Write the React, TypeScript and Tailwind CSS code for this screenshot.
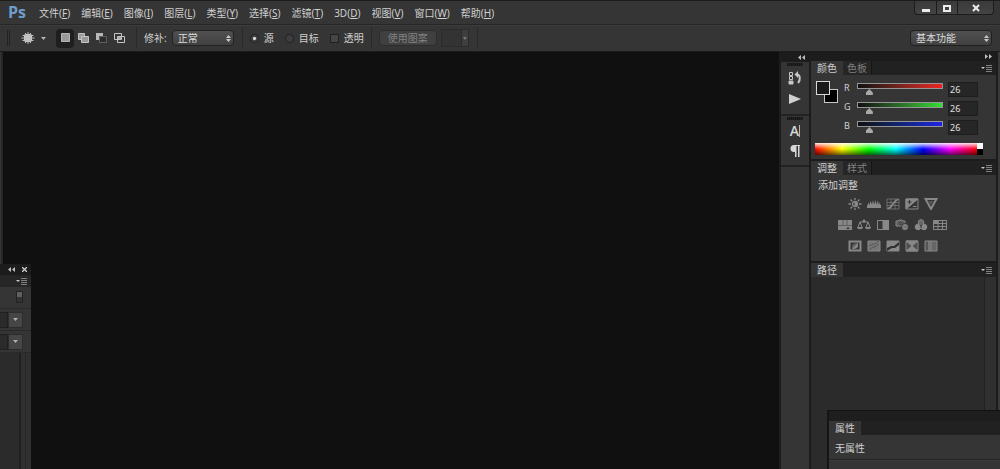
import React, { useState } from "react";

const menus = [
  { name: "文件", shortcut: "F" },
  { name: "编辑", shortcut: "E" },
  { name: "图像", shortcut: "I" },
  { name: "图层", shortcut: "L" },
  { name: "类型", shortcut: "Y" },
  { name: "选择", shortcut: "S" },
  { name: "滤镜", shortcut: "T" },
  { name: "3D", shortcut: "D" },
  { name: "视图", shortcut: "V" },
  { name: "窗口", shortcut: "W" },
  { name: "帮助", shortcut: "H" },
];

const channels = [
  {
    name: "R",
    track: "[&::-webkit-slider-runnable-track]:to-[#f02020]",
  },
  {
    name: "G",
    track: "[&::-webkit-slider-runnable-track]:to-[#30e030]",
  },
  {
    name: "B",
    track: "[&::-webkit-slider-runnable-track]:to-[#2020e8]",
  },
];

// Adjustment icons, one array per row, drawn on a 14x12 grid
const adjustments = [
  [
    {
      name: "亮度/对比度",
      art: (
        <>
          <circle cx="7" cy="6" r="2.5" strokeWidth="1.3" />
          <path d="M7 3.5a2.5 2.5 0 0 1 0 5z" fill="currentColor" />
          <path
            d="M7 0v2M7 10v2M0.500 6h2.500M11 6h2.500M2.500 1.500l1.700 1.700M9.800 8.800l1.700 1.700M2.500 10.500l1.700-1.700M9.800 3.200l1.700-1.700"
            strokeWidth="1.300"
          />
        </>
      ),
    },
    {
      name: "色阶",
      art: (
        <path
          d="M0 10V6l1 2V4l1.500 3 1-4 1.500 3.500L6 2l1.200 4.500L8.500 2l1 4.500 1.500-4 .8 4.500L13 4v3.500l1-1.500v4z"
          fill="currentColor"
          stroke="none"
        />
      ),
    },
    {
      name: "曲线",
      art: (
        <>
          <path d="M1 1h12v10H1zM5 1v10M9 1v10M1 4.500h12M1 7.500h12" strokeOpacity="0.6" />
          <path d="M1.500 10.500C7 10 7 2 12.500 1.500" strokeWidth="1.500" />
        </>
      ),
    },
    {
      name: "曝光度",
      art: (
        <>
          <path d="M1 1h12v10H1z" />
          <path d="M1 11V1h12z" fill="currentColor" />
          <path d="M2.500 4h4M4.500 2v4" stroke="#353535" />
          <path d="M8 8.500h3.500" />
        </>
      ),
    },
    {
      name: "自然饱和度",
      art: (
        <>
          <path d="M1.500 1h11L7 11z" strokeWidth="2" />
          <path d="M4.500 3h5L7 7.500z" fill="currentColor" fillOpacity="0.4" stroke="none" />
        </>
      ),
    },
  ],
  [
    {
      name: "色相/饱和度",
      art: (
        <>
          <path d="M0 1h14v10H0z" fill="currentColor" stroke="none" />
          <path d="M5 1v5M9 1v5M0 6.500h14" stroke="#5c5c5c" />
          <path d="M8 10l2-2 2 2z" fill="#353535" stroke="none" />
        </>
      ),
    },
    {
      name: "色彩平衡",
      art: (
        <>
          <path d="M7 0.500V3M2.500 3h9M3 3L1 8M3 3l2 5M11 3L9 8M11 3l2 5" />
          <path d="M0 8h6c0 3-6 3-6 0zM8 8h6c0 3-6 3-6 0z" fill="currentColor" stroke="none" />
          <circle cx="7" cy="2" r="1.500" fill="currentColor" stroke="none" />
        </>
      ),
    },
    {
      name: "黑白",
      art: (
        <>
          <path d="M1.500 1.500h11v9h-11z" />
          <path d="M7 1.500h5.500v9H7z" fill="currentColor" />
        </>
      ),
    },
    {
      name: "照片滤镜",
      art: (
        <>
          <path d="M1 2h2l1-1h3l1 1h2v5H1z" fill="currentColor" fillOpacity="0.5" />
          <circle cx="5.500" cy="4.500" r="1.500" stroke="#444" />
          <circle cx="10" cy="8" r="3.500" fill="currentColor" stroke="#353535" />
          <path d="M8 8h4" stroke="#5c5c5c" />
        </>
      ),
    },
    {
      name: "通道混合器",
      art: (
        <>
          <circle cx="7" cy="3.500" r="2.800" fill="currentColor" fillOpacity="0.6" />
          <circle cx="4" cy="8" r="2.800" fill="currentColor" />
          <circle cx="10" cy="8" r="2.800" fill="currentColor" />
          <path d="M5 5l2 1 2-1-1.500 2v2h-1V7z" fill="#353535" stroke="none" />
        </>
      ),
    },
    {
      name: "颜色查找",
      art: (
        <>
          <path d="M.5 1.500h13v9H.5zM5 1.500v9M9.500 1.500v9M.5 4.500h13M.5 7.500h13" />
          <path d="M1 2h4v2H1z" fill="currentColor" />
        </>
      ),
    },
  ],
  [
    {
      name: "反相",
      art: (
        <>
          <path d="M1.500 1.500h11v9h-11z" strokeWidth="2" />
          <path d="M4 9V7c0-3 2-4 6-4v2c0 3-2 4-6 4z" fill="currentColor" fillOpacity="0.5" stroke="none" />
          <path d="M4 9l6-6v2c0 3-2 4-6 4z" fill="currentColor" stroke="none" />
        </>
      ),
    },
    {
      name: "色调分离",
      art: (
        <>
          <path d="M1 1h12v10H1z" fill="currentColor" fillOpacity="0.8" />
          <path d="M2 6l4-2h2l4-3M2 10l4-3h2l4-3" stroke="#555" />
        </>
      ),
    },
    {
      name: "阈值",
      art: (
        <>
          <path d="M1 1h12v10H1z" fill="currentColor" />
          <path d="M1 8l4-2h3l5-4v3L9 8H6l-5 3z" fill="#303030" stroke="none" />
        </>
      ),
    },
    {
      name: "可选颜色",
      art: (
        <>
          <path d="M1 1h12v10H1z" />
          <path d="M1 1h12L7 6zM1 11h12L7 6z" fill="currentColor" />
          <path d="M1 1v10l6-5zM13 1v10L7 6z" fill="currentColor" fillOpacity="0.3" stroke="none" />
        </>
      ),
    },
    {
      name: "渐变映射",
      art: (
        <>
          <path d="M1 1h12v10H1z" />
          <path d="M1 1h3v10H1z" fill="currentColor" fillOpacity="0.4" stroke="none" />
          <path d="M4 1h4v10H4z" fill="currentColor" fillOpacity="0.8" stroke="none" />
          <path d="M8 1h5v10H8z" fill="currentColor" fillOpacity="0.6" stroke="none" />
        </>
      ),
    },
  ],
];

const selectionModes = [
  {
    name: "新选区",
    art: <path d="M2.500 1.500h8v8h-8z" fill="#999" stroke="#b4b4b4" />,
  },
  {
    name: "添加到选区",
    art: (
      <>
        <path d="M1.500 1.500h6v6h-6z" fill="#999" stroke="#c4c4c4" />
        <path d="M4.500 4.500h7v6h-7z" fill="#999" stroke="#c4c4c4" />
      </>
    ),
  },
  {
    name: "从选区减去",
    art: (
      <>
        <path d="M1 1h7v3H4v4H1z" fill="#b8b8b8" />
        <path d="M4.500 4.500h7v6h-7z" fill="#2c2c2c" stroke="#606060" />
      </>
    ),
  },
  {
    name: "与选区交叉",
    art: (
      <>
        <path d="M1.500 1.500h7v6h-7zM4.500 4.500h7v6h-7z" stroke="#c4c4c4" />
        <path d="M5 5h3v2H5z" fill="#aaa" />
      </>
    ),
  },
];

const Chevrons = ({ right = false }: { right?: boolean }) => (
  <svg width="7" height="5" viewBox="0 0 7 5" fill="#bdbdbd">
    {right ? (
      <path d="M0 0l3 2.500L0 5zM4 0l3 2.500L4 5z" />
    ) : (
      <path d="M3 0L0 2.500 3 5zM7 0L4 2.500 7 5z" />
    )}
  </svg>
);

const PanelMenu = () => (
  <button aria-label="面板菜单" className="ml-auto self-center">
    <svg width="12" height="7" viewBox="0 0 12 7">
      <path d="M0 2h4L2 4z" fill="#c8c8c8" />
      <path d="M5 .5h6M5 2.500h6M5 4.500h6M5 6.500h6" stroke="#808080" />
    </svg>
  </button>
);

const Tabs = ({ names, menu = true }: { names: string[]; menu?: boolean }) => (
  <div className="flex h-[14px] bg-[#212121] pr-[3px] leading-[12px]">
    {names.map((name, idx) => (
      <button
        key={name}
        className={
          idx === 0
            ? "bg-[#353535] pr-1.5 pl-1.5 text-[#d0d0d0]"
            : "border-r border-[#161616] bg-[#262626] px-1 text-[#808080]"
        }
      >
        {name}
      </button>
    ))}
    {menu && <PanelMenu />}
  </div>
);

const SpinArrows = () => (
  <svg
    width="5"
    height="7"
    viewBox="0 0 5 7"
    fill="#c8c8c8"
    className="pointer-events-none absolute top-[5px] right-[3px]"
  >
    <path d="M0 3l2.500-3L5 3zM0 4h5L2.500 7z" />
  </svg>
);

const Divider = () => (
  <div className="h-[22px] w-px border-l border-[#2a2a2a] bg-[#3d3d3d]" />
);

const Grip = () => (
  <div className="mx-auto h-[3px] w-4 bg-[repeating-linear-gradient(90deg,#161616_0_1px,#222_1px_2px)]" />
);

const TitleBar = () => (
  <header className="flex h-6 items-start border-b border-[#262626]">
    <span className="w-[39px] pl-2 font-['Open_Sans',sans-serif] text-[16px] leading-[22px] font-bold text-[#6c9dcd]">
      Ps
    </span>
    <nav className="flex gap-[11px] pt-[5px] leading-[14px]">
      {menus.map((menu) => (
        <button key={menu.name} className="whitespace-nowrap">
          {menu.name}(<u>{menu.shortcut}</u>)
        </button>
      ))}
    </nav>
    <div className="mr-1.5 ml-auto flex h-[14px] divide-x divide-[#1c1c1c] rounded-b-sm border border-t-0 border-[#1c1c1c] bg-linear-to-b from-[#3a3a3a] to-[#444]">
      <button aria-label="最小化" className="flex w-[22px] justify-center pt-[8px]">
        <span className="h-[3px] w-2 bg-[#ececec]" />
      </button>
      <button aria-label="最大化" className="flex w-[21px] justify-center pt-[4px]">
        <span className="h-[7px] w-2 border-2 border-[#ececec]" />
      </button>
      <button aria-label="关闭" className="flex w-[35px] justify-center pt-[3px]">
        <svg width="8" height="8" viewBox="0 0 8 8" stroke="#ececec" strokeWidth="2">
          <path d="M1 1l6 6M7 1L1 7" />
        </svg>
      </button>
    </div>
  </header>
);

const radioStyle =
  "size-[9px] appearance-none rounded-full border border-[#202020] bg-[#3e3e3e] checked:bg-[radial-gradient(circle,#e0e0e0_0_1px,#444_2px)]";

const OptionsBar = () => {
  const [mode, setMode] = useState("新选区");
  const [source, setSource] = useState("源");

  return (
    <div className="flex h-[27px] items-center border-t border-b border-t-[#3c3c3c] border-b-[#1c1c1c] pr-2 pb-px pl-[7px]">
      <div className="h-4 w-[3px] border-x border-[#222]" />
      <button aria-label="修补工具" className="ml-[11px] flex items-center gap-1.5">
        <svg width="14" height="12" viewBox="0 0 14 12">
          <rect x="3" y="2" width="8" height="8" rx="2" fill="#cfcfcf" />
          <path
            d="M4.500 1v10M7 0v12M9.500 1v10M1.500 3.500h11M0.500 6h13M1.500 8.500h11"
            stroke="#bcbcbc"
          />
        </svg>
        <svg width="5" height="3" viewBox="0 0 5 3">
          <path d="M0 0h5L2.500 3z" fill="#b5b5b5" />
        </svg>
      </button>
      <div className="ml-2.5 flex">
        {selectionModes.map((item) => (
          <button
            key={item.name}
            aria-label={item.name}
            onClick={() => setMode(item.name)}
            className={`flex h-[19px] w-[18px] items-center justify-center rounded-sm ${
              mode === item.name ? "bg-[#1e1e1e]" : ""
            }`}
          >
            <svg width="12" height="12" viewBox="0 0 12 12" fill="none">
              {item.art}
            </svg>
          </button>
        ))}
      </div>
      <div className="ml-2">
        <Divider />
      </div>
      <label htmlFor="patch" className="ml-[7px]">
        修补:
      </label>
      <div className="relative ml-[5px]">
        <select
          id="patch"
          className="block h-4 w-[62px] appearance-none rounded-sm border border-[#222] bg-linear-to-b from-[#505050] to-[#414141] pl-[5px] leading-[14px] text-[#dedede]"
        >
          <option>正常</option>
          <option>内容识别</option>
        </select>
        <SpinArrows />
      </div>
      <div className="ml-2">
        <Divider />
      </div>
      {["源", "目标"].map((name) => (
        <label key={name} className="ml-[7px] flex items-center gap-[5px] pr-[4px]">
          <input
            type="radio"
            name="source"
            checked={source === name}
            onChange={() => setSource(name)}
            className={radioStyle}
          />
          {name}
        </label>
      ))}
      <label className="ml-[7px] flex items-center gap-[5px]">
        <input
          type="checkbox"
          className="size-[9px] appearance-none border border-[#202020] bg-[#454545] checked:bg-[#d0d0d0]"
        />
        透明
      </label>
      <div className="ml-[7px]">
        <Divider />
      </div>
      <button
        disabled
        className="ml-[7px] h-4 w-[58px] rounded-sm border border-[#2d2d2d] bg-[#404040] leading-[14px] text-[#828282]"
      >
        使用图案
      </button>
      <button
        disabled
        aria-label="图案"
        className="ml-1 flex h-[18px] w-7 items-center justify-end border border-[#2b2b2b] bg-[#333]"
      >
        <span className="flex h-4 w-[7px] items-center justify-center border-l border-[#2b2b2b] bg-[#3e3e3e]">
          <svg width="4" height="3" viewBox="0 0 4 3">
            <path d="M0 0h4L2 3z" fill="#777" />
          </svg>
        </span>
      </button>
      <div className="ml-2">
        <Divider />
      </div>
      <div className="relative ml-auto">
        <select
          aria-label="工作区"
          className="block h-4 w-[82px] appearance-none rounded-sm border border-[#1f1f1f] bg-linear-to-b from-[#505050] to-[#414141] pl-[5px] leading-[14px] text-[#dedede]"
        >
          <option>基本功能</option>
          <option>绘画</option>
        </select>
        <SpinArrows />
      </div>
    </div>
  );
};

const IconDock = () => (
  <div className="flex w-8 flex-col border-x-2 border-[#1c1c1c] bg-[#353535]">
    <div className="flex h-[10px] items-center justify-end bg-[#1c1c1c] pr-1">
      <Chevrons />
    </div>
    <div className="flex h-[54px] flex-col items-center border-b-2 border-[#222] pt-px">
      <Grip />
      <button aria-label="历史记录" className="mt-[5px]">
        <svg width="14" height="14" viewBox="0 0 14 14" fill="none" stroke="#c6c6c6">
          <path d="M1.500 1.500h3v3h-3zM1.500 5.500h3v3h-3z" />
          <path d="M1 10h4v3H1z" fill="#c6c6c6" />
          <path d="M9 3.500c3 0 4 5 1 8.500" strokeWidth="2" />
          <path d="M6.500 3.500L10 0v7z" fill="#c6c6c6" stroke="none" />
        </svg>
      </button>
      <button aria-label="动作" className="mt-[9px]">
        <svg width="12" height="10" viewBox="0 0 12 10">
          <path d="M0 0l12 5-12 5z" fill="#d0d0d0" />
        </svg>
      </button>
    </div>
    <div className="flex h-[51px] flex-col items-center border-b-2 border-[#222] pt-px">
      <Grip />
      <button
        aria-label="字符"
        className="mt-[2px] flex items-center font-['Open_Sans',sans-serif] text-[14px] leading-[18px] font-semibold text-[#d6d6d6]"
      >
        A
        <span className="h-3 w-px bg-[#b8b8b8]" />
      </button>
      <button
        aria-label="段落"
        className="mt-[5px]"
      >
        <svg width="10" height="12" viewBox="0 0 10 12" fill="#d6d6d6">
          <path d="M6 0v7H4a3.500 3.500 0 0 1 0-7z" />
          <path d="M5 0h1.500v12H5zM8 0h1.500v12H8zM5 0h5v1H5z" />
        </svg>
      </button>
    </div>
  </div>
);

const ColorPanel = () => {
  const [values, setValues] = useState([26, 26, 26]);

  const update = (idx: number, value: number) => {
    setValues(values.map((v, i) => (i === idx ? value : v)));
  };

  return (
    <section className="border-b-2 border-[#1c1c1c]">
      <Tabs names={["颜色", "色板"]} />
      <div className="flex h-[68px] pt-[6px]">
        <div className="relative ml-[5px] h-[22px] w-[22px]">
          <span className="absolute right-0 bottom-0 size-[14px] border border-[#c8c8c8] bg-black" />
          <span
            className="absolute top-0 left-0 size-[14px] border border-[#d8d8d8]"
            style={{ backgroundColor: `rgb(${values.join(",")})` }}
          />
        </div>
        <div className="flex flex-1 flex-col gap-[5px] pl-[6px]">
          {channels.map((channel, idx) => (
            <div key={channel.name} className="flex h-[14px] items-start">
              <label
                htmlFor={`slider-${channel.name}`}
                className="w-[13px] text-[9px] leading-[14px]"
              >
                {channel.name}
              </label>
              <input
                id={`slider-${channel.name}`}
                type="range"
                min={0}
                max={255}
                value={values[idx]}
                onChange={(e) => update(idx, Number(e.target.value))}
                className={`mt-[2px] h-3 w-[86px] appearance-none bg-transparent [&::-webkit-slider-runnable-track]:h-[6px] [&::-webkit-slider-runnable-track]:self-start [&::-webkit-slider-runnable-track]:border [&::-webkit-slider-runnable-track]:border-[#969696] [&::-webkit-slider-runnable-track]:bg-linear-to-r [&::-webkit-slider-runnable-track]:from-[#101010] [&::-webkit-slider-thumb]:mt-[5px] [&::-webkit-slider-thumb]:h-[6px] [&::-webkit-slider-thumb]:w-[7px] [&::-webkit-slider-thumb]:appearance-none [&::-webkit-slider-thumb]:bg-[#a8a8a8] [&::-webkit-slider-thumb]:[clip-path:polygon(50%_0,100%_60%,100%_100%,0_100%,0_60%)] ${channel.track}`}
              />
              <input
                aria-label={channel.name}
                value={values[idx]}
                onChange={(e) => update(idx, Number(e.target.value) || 0)}
                className="mt-px ml-[5px] h-[15px] w-[30px] border border-[#1e1e1e] bg-[#262626] pl-px text-[9px] text-[#e0e0e0]"
              />
            </div>
          ))}
        </div>
      </div>
      <div className="mb-1 ml-1 flex h-3 w-[168px]">
        <div className="flex-1 bg-[linear-gradient(to_bottom,rgba(255,255,255,0.9),transparent_50%,rgba(0,0,0,0.6)),linear-gradient(to_right,#f00,#ff0,#0f0,#0ff,#00f,#f0f,#f00)]" />
        <div className="w-1.5 bg-linear-to-b from-white from-50% to-black to-50%" />
      </div>
    </section>
  );
};

const AdjustmentPanel = () => (
  <section className="border-b-2 border-[#1c1c1c]">
    <Tabs names={["调整", "样式"]} />
    <h2 className="pt-[3px] pl-[7px] leading-[14px]">添加调整</h2>
    <div className="flex h-[69px] flex-col items-center gap-[9px] pt-1.5 pr-[22px] text-[#888]">
      {adjustments.map((row, idx) => (
        <div key={idx} className="flex gap-[5px]">
          {row.map((item) => (
            <button key={item.name} aria-label={item.name}>
              <svg
                width="14"
                height="12"
                viewBox="0 0 14 12"
                fill="none"
                stroke="currentColor"
              >
                {item.art}
              </svg>
            </button>
          ))}
        </div>
      ))}
    </div>
  </section>
);

const FloatingTools = () => (
  <aside className="absolute top-[263px] bottom-0 left-0 flex w-[31px] flex-col bg-[#353535]">
    <div className="flex h-[11px] items-center justify-end gap-[7px] bg-[#1c1c1c] pr-1">
      <Chevrons />
      <button aria-label="关闭面板">
        <svg width="5" height="5" viewBox="0 0 5 5" stroke="#d0d0d0" strokeWidth="1.300">
          <path d="M0 0l5 5M5 0L0 5" />
        </svg>
      </button>
    </div>
    <div className="flex h-3 bg-[#262626] pr-[3px]">
      <PanelMenu />
    </div>
    <div className="flex h-[22px] justify-end border-b border-[#292929] pt-1 pr-2">
      <button
        aria-label="滤镜开关"
        className="h-3 w-[7px] border border-[#222] bg-linear-to-b from-[#606060] from-50% to-[#333] to-50%"
      />
    </div>
    {["模式", "锁定"].map((name) => (
      <div key={name} className="flex h-[22px] items-center border-b border-[#292929]">
        <div className="h-4 w-2 border-y border-r border-[#202020] bg-[#2b2b2b]" />
        <button
          aria-label={name}
          className="flex h-4 w-[15px] items-center justify-center border border-[#2c2c2c] bg-[#464646]"
        >
          <svg width="5" height="3" viewBox="0 0 5 3">
            <path d="M0 0h5L2.500 3z" fill="#b0b0b0" />
          </svg>
        </button>
      </div>
    ))}
    <div className="flex flex-1 bg-[#2b2b2b]">
      <div className="ml-auto w-[12px] border-l-2 border-[#202020] bg-[#303030] pl-[4px]">
        <div className="h-full border-l border-[#262626]" />
      </div>
    </div>
  </aside>
);

const PropertiesPanel = () => (
  <aside className="absolute right-0 bottom-0 h-[59px] w-[173px] border-l-2 border-[#151515] bg-[#353535]">
    <div className="h-[11px] border-t border-[#111] bg-[#1e1e1e]" />
    <Tabs names={["属性"]} menu={false} />
    <p className="pt-[5px] pl-1.5 leading-[16px]">无属性</p>
    <div className="mt-[3px] border-t border-[#242424] bg-[#3c3c3c] pt-px" />
  </aside>
);

const App: React.FC = () => {
  return (
    <div className="relative flex h-screen flex-col overflow-hidden border-t border-[#1c1c1c] bg-[#353535] font-['Noto_Sans','Noto_Sans_CJK_SC',sans-serif] text-[10px] text-[#d0d0d0]">
      <TitleBar />
      <OptionsBar />
      <div className="flex min-h-0 flex-1">
        <main className="ml-px flex-1 border-l-2 border-[#262626] bg-[#101010]" />
        <IconDock />
        <div className="flex w-[185px] flex-col">
          <div className="flex h-[9px] items-center justify-end bg-[#1c1c1c] pr-1">
            <Chevrons right />
          </div>
          <ColorPanel />
          <AdjustmentPanel />
          <section className="flex flex-1 flex-col">
            <Tabs names={["路径"]} />
            <div className="flex flex-1 bg-[#2b2b2b]">
              <div className="ml-auto w-[12px] border-l border-[#222] bg-[#303030]" />
            </div>
          </section>
        </div>
        <div className="w-1 border-l-2 border-[#1c1c1c] bg-[#3a3a3a]" />
      </div>
      <FloatingTools />
      <PropertiesPanel />
    </div>
  );
};

export default App;
